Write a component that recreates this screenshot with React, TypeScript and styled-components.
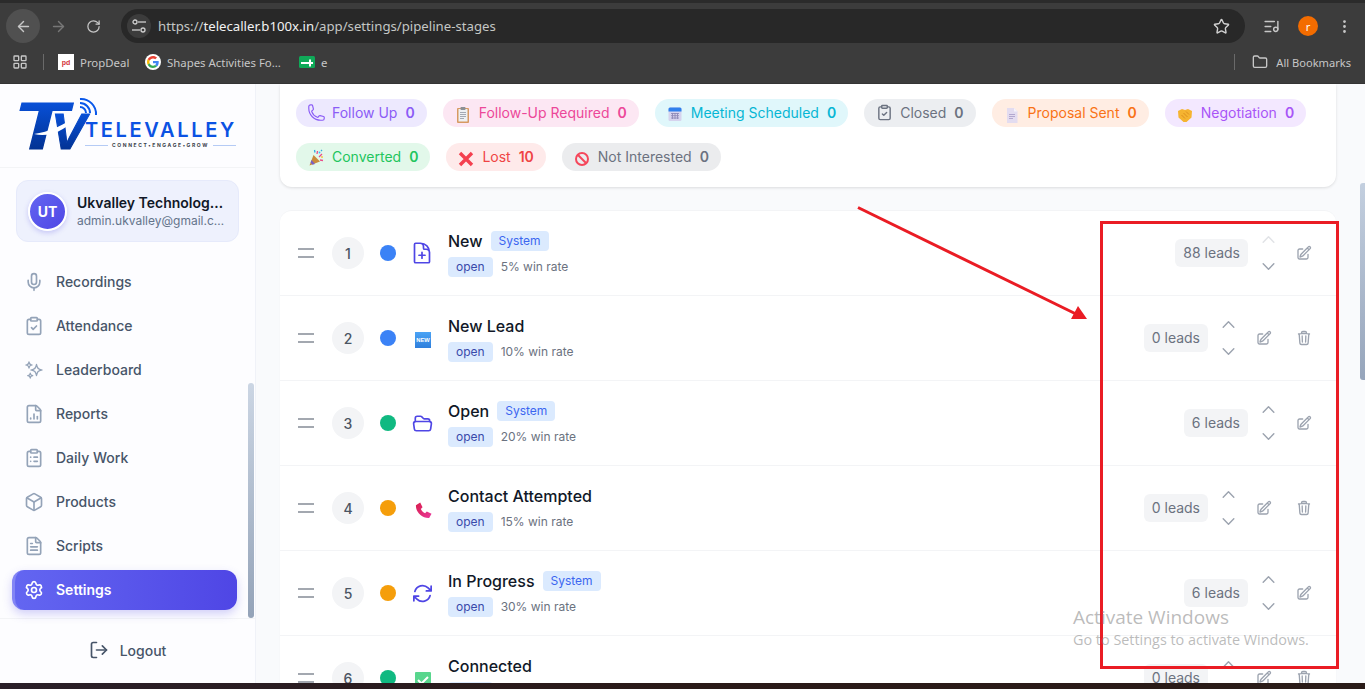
import React from "react";
import styled, { createGlobalStyle } from "styled-components";
import {
  HiOutlineSparkles,
  HiOutlinePhone,
  HiOutlineDocumentPlus,
  HiOutlineFolderOpen,
  HiOutlineArrowPath,
  HiOutlinePencilSquare,
  HiOutlineTrash,
  HiOutlineChevronUp,
  HiOutlineChevronDown,
} from "react-icons/hi2";
import {
  ArrowLeft,
  ArrowRight,
  RotateCw,
  Star,
  ListMusic,
  EllipsisVertical,
  LayoutGrid,
  Folder,
  Mic,
  ClipboardCheck,
  FileChartColumn,
  ClipboardList,
  Box,
  FileText,
  Settings,
  LogOut,
} from "lucide-react";

const Global = createGlobalStyle`
  html, body { margin: 0; padding: 0; overflow: hidden; background: #fff; }
  * { box-sizing: border-box; }
`;

const Frame = styled.div`
  position: relative;
  width: 1365px;
  height: 689px;
  overflow: hidden;
  display: flex;
  flex-direction: column;
  font-family: Inter, "Liberation Sans", sans-serif;
`;

/* ---------- browser chrome ---------- */
const Chrome = styled.header`
  flex: none;
  height: 84px;
  background: #3c3c3c;
  border-top: 3px solid #2b2b2b;
  border-bottom: 1px solid #343434;
  font-family: "Noto Sans", "Open Sans", sans-serif;
  display: flex;
  flex-direction: column;
`;
const Toolbar = styled.div`
  height: 40px;
  padding-top: 6px;
  display: flex;
  align-items: center;
  color: #c7c7c7;
`;
const NavRound = styled.div<{ $active?: boolean; $dim?: boolean }>`
  flex: none;
  width: 34px;
  height: 34px;
  margin-left: ${(p) => (p.$active ? "6px" : "1px")};
  border-radius: 50%;
  display: flex;
  align-items: center;
  justify-content: center;
  background: ${(p) => (p.$active ? "#505050" : "transparent")};
  color: ${(p) => (p.$dim ? "#777" : "#c7c7c7")};
`;
const AddressBar = styled.div`
  width: 1124px;
  height: 34px;
  margin-left: 11px;
  border-radius: 17px;
  background: #282828;
  display: flex;
  align-items: center;
  padding: 0 15px 0 6px;
`;
const TuneWrap = styled.div`
  flex: none;
  width: 24px;
  height: 24px;
  border-radius: 50%;
  background: #3c3c3c;
  display: flex;
  align-items: center;
  justify-content: center;
`;
const Url = styled.div`
  margin-left: 7px;
  flex: 1;
  font-size: 13.2px;
  color: #c4c7c5;
  white-space: nowrap;
  b { font-weight: 400; color: #f2f2f2; }
`;
const ToolRight = styled.div`
  display: flex;
  align-items: center;
  margin-left: 18px;
  gap: 18px;
  color: #c7c7c7;
`;
const Profile = styled.div`
  width: 20px;
  height: 20px;
  border-radius: 50%;
  background: #f36c00;
  color: #fff;
  font-size: 11px;
  display: flex;
  align-items: center;
  justify-content: center;
`;
const BookmarkBar = styled.div`
  height: 40px;
  padding: 0 0 2px 12px;
  display: flex;
  align-items: center;
  color: #c7c7c7;
  font-size: 11.4px;
`;
const BarDivider = styled.span`
  width: 1px;
  height: 16px;
  background: #6a6a6a;
  margin: 0 14px 0 15px;
`;
const EndDivider = styled(BarDivider)`
  margin: 0 9px 0 0;
`;
const Bookmark = styled.div<{ $w: number }>`
  width: ${(p) => p.$w}px;
  display: flex;
  align-items: center;
  gap: 6px;
  white-space: nowrap;
`;
const PdIcon = styled.span`
  width: 16px;
  height: 16px;
  background: #fff;
  color: #d3333a;
  font-size: 7px;
  font-weight: 700;
  display: flex;
  align-items: center;
  justify-content: center;
  font-family: "Liberation Sans", sans-serif;
`;
const BookmarkEnd = styled.div`
  margin-left: auto;
  display: flex;
  align-items: center;
  padding-right: 14px;
  gap: 8px;
  font-size: 11.1px;
`;

/* ---------- app layout ---------- */
const Body = styled.div`
  flex: 1;
  min-height: 0;
  display: flex;
  overflow: hidden;
`;
const Taskbar = styled.div`
  flex: none;
  height: 6px;
  background: linear-gradient(90deg, #2a1f28, #2a1a18 50%, #2a1c18);
`;
const Sidebar = styled.aside`
  position: relative;
  flex: none;
  width: 256px;
  background: #fdfdff;
  border-right: 1px solid #f0f2f8;
  display: flex;
  flex-direction: column;
`;
const LogoArea = styled.div`
  flex: none;
  height: 84px;
  padding: 14px 0 0 20px;
  display: flex;
  align-items: flex-start;
  border-bottom: 1px solid #f3f4f6;
`;
const LogoWords = styled.div`
  margin-left: -13px;
  margin-top: 22px;
  width: 151px;
  display: flex;
  flex-direction: column;
`;
const LogoName = styled.div`
  font-size: 20px;
  line-height: 20px;
  font-weight: 600;
  letter-spacing: 2.65px;
  color: #0b52e3;
  white-space: nowrap;
`;
const LogoTag = styled.div`
  margin-top: 2px;
  display: flex;
  align-items: center;
  gap: 4px;
  font-size: 5px;
  line-height: 6px;
  font-weight: 700;
  letter-spacing: 1.6px;
  color: #3a3f4a;
  white-space: nowrap;
  &::before, &::after {
    content: "";
    flex: 1;
    height: 1px;
    background: #b5cbf5;
  }
`;
const UserCard = styled.div`
  flex: none;
  margin: 12px 16px 0;
  height: 62px;
  border-radius: 12px;
  background: #eef1fd;
  border: 1px solid #e6eafb;
  display: flex;
  align-items: center;
  padding-left: 11px;
  gap: 10px;
`;
const Avatar = styled.div`
  flex: none;
  width: 39px;
  height: 39px;
  border-radius: 50%;
  border: 2px solid #fff;
  background: linear-gradient(135deg, #6366f1, #4f46e5);
  box-shadow: 0 2px 5px rgba(79, 70, 229, 0.25);
  color: #fff;
  font-size: 14px;
  font-weight: 700;
  display: flex;
  align-items: center;
  justify-content: center;
`;
const UserText = styled.div`
  width: 148px;
  min-width: 0;
`;
const UserName = styled.div`
  font-size: 14px;
  line-height: 20px;
  font-weight: 600;
  color: #111827;
  white-space: nowrap;
  overflow: hidden;
  text-overflow: ellipsis;
`;
const UserMail = styled.div`
  font-size: 12px;
  line-height: 16px;
  color: #64748b;
  white-space: nowrap;
  overflow: hidden;
  text-overflow: ellipsis;
`;
const Nav = styled.nav`
  flex: 1;
  padding: 20px 18px 8px 12px;
  display: flex;
  flex-direction: column;
  gap: 4px;
  border-bottom: 1px solid #f3f4f6;
`;
const NavItem = styled.div<{ $active?: boolean }>`
  flex: none;
  height: 40px;
  width: 225px;
  padding-left: ${(p) => (p.$active ? "9px" : "12px")};
  padding-bottom: 1px;
  gap: 12px;
  display: flex;
  align-items: center;
  border-radius: 12px;
  font-size: 14px;
  font-weight: ${(p) => (p.$active ? 600 : 500)};
  color: ${(p) => (p.$active ? "#fff" : "#475569")};
  background: ${(p) => (p.$active ? "linear-gradient(90deg, #6366f1, #4f46e5)" : "transparent")};
  box-shadow: ${(p) => (p.$active ? "0 4px 10px rgba(79, 70, 229, 0.25)" : "none")};
  border-left: ${(p) => (p.$active ? "3px solid #8385f5" : "none")};
  svg { flex: none; color: ${(p) => (p.$active ? "#fff" : "#94a3b8")}; }
`;
const Flipped = styled(HiOutlineSparkles)`
  transform: scaleX(-1);
`;
const SideScroll = styled.div`
  position: absolute;
  right: 1px;
  top: 299px;
  width: 6px;
  height: 235px;
  border-radius: 3px;
  background: linear-gradient(180deg, #ccd6e4, #94a3b8);
`;
const Logout = styled.div`
  flex: none;
  height: 65px;
  display: flex;
  align-items: center;
  justify-content: center;
  gap: 11px;
  padding-bottom: 3px;
  font-size: 14px;
  font-weight: 500;
  color: #475569;
`;

/* ---------- main ---------- */
const Main = styled.main`
  position: relative;
  flex: 1;
  min-width: 0;
  background: #f9fafc;
  padding: 0 29px 0 24px;
  display: flex;
  flex-direction: column;
  gap: 23px;
  overflow: hidden;
`;
const PageScroll = styled.div`
  position: absolute;
  right: 0;
  top: 99px;
  width: 5px;
  height: 197px;
  border-radius: 3px 0 0 3px;
  background: linear-gradient(180deg, #c3cfdf, #96a5bb);
`;
const ChipCard = styled.section`
  flex: none;
  background: #fff;
  border-radius: 0 0 12px 12px;
  box-shadow: 0 1px 3px rgba(0, 0, 0, 0.12);
  padding: 15px 16px 16px;
  display: flex;
  flex-wrap: wrap;
  gap: 16px;
`;
const Chip = styled.div<{ $bg: string; $fg: string }>`
  height: 28px;
  border-radius: 14px;
  padding: 0 12px 1px;
  background: ${(p) => p.$bg};
  color: ${(p) => p.$fg};
  display: flex;
  align-items: center;
  font-size: 14px;
  white-space: nowrap;
`;
const ChipIcon = styled.span`
  flex: none;
  width: 16px;
  height: 20px;
  display: flex;
  align-items: center;
  justify-content: center;
  svg { flex: none; }
`;
const ChipLabel = styled.span`
  margin-left: 8px;
`;
const ChipCount = styled.span`
  margin-left: 8px;
  font-weight: 600;
`;
const StageList = styled.section`
  flex: none;
  background: #fff;
  border-top: 1px solid #f3f4f6;
  border-radius: 12px 12px 0 0;
  box-shadow: 0 1px 2px rgba(0, 0, 0, 0.03);
`;
const Row = styled.div`
  height: 85px;
  padding: 0 16px;
  display: flex;
  align-items: center;
  gap: 16px;
  border-bottom: 1px solid #f3f4f6;
`;
const Grip = styled.svg`
  flex: none;
`;
const Num = styled.div`
  flex: none;
  width: 32px;
  height: 32px;
  border-radius: 50%;
  background: #f3f4f6;
  color: #4b5563;
  font-size: 14px;
  font-weight: 500;
  display: flex;
  align-items: center;
  justify-content: center;
`;
const Dot = styled.span<{ $c: string }>`
  flex: none;
  width: 16px;
  height: 16px;
  border-radius: 50%;
  background: ${(p) => p.$c};
`;
const StageIcon = styled.div<{ $emoji?: boolean }>`
  flex: none;
  width: 20px;
  height: 20px;
  color: #4f46e5;
  display: flex;
  align-items: center;
  justify-content: center;
  ${(p) => p.$emoji && "transform: translate(1px, 2px);"}
  svg { flex: none; }
`;
const StageInfo = styled.div`
  display: flex;
  flex-direction: column;
  gap: 4px;
`;
const NameLine = styled.div`
  height: 24px;
  display: flex;
  align-items: center;
  gap: 8px;
`;
const StageName = styled.span`
  font-size: 16px;
  font-weight: 500;
  color: #111827;
`;
const SystemTag = styled.span`
  height: 20px;
  padding: 0 8px 1px;
  border-radius: 4px;
  background: #dbeafe;
  color: #3b66f0;
  font-size: 12px;
  display: flex;
  align-items: center;
`;
const SubLine = styled.div`
  height: 20px;
  padding-bottom: 1px;
  display: flex;
  align-items: center;
  gap: 8px;
  font-size: 12px;
  color: #6b7280;
`;
const OpenTag = styled.span`
  height: 20px;
  padding: 0 8px;
  border-radius: 4px;
  background: #dbeafe;
  color: #3949ab;
  display: flex;
  align-items: center;
`;
const RowRight = styled.div`
  margin-left: auto;
  display: flex;
  align-items: center;
  gap: 8px;
`;
const Leads = styled.div`
  height: 28px;
  padding: 0 8px 1px;
  border-radius: 6px;
  background: #f3f4f6;
  color: #6b7280;
  font-size: 14px;
  display: flex;
  align-items: center;
`;
const Arrows = styled.div`
  width: 24px;
  height: 44px;
  display: flex;
  flex-direction: column;
  align-items: center;
  justify-content: space-between;
  color: #9ca3af;
`;
const Arrow = styled.span<{ $off?: boolean }>`
  display: flex;
  opacity: ${(p) => (p.$off ? 0.3 : 1)};
`;
const Action = styled.div`
  width: 32px;
  height: 32px;
  display: flex;
  align-items: center;
  justify-content: center;
  color: #9ca3af;
`;

/* ---------- annotations over the shot ---------- */
const RedBox = styled.div`
  position: absolute;
  left: 1100px;
  top: 221px;
  width: 239px;
  height: 448px;
  border: 3px solid #ea1c24;
  pointer-events: none;
`;
const RedArrow = styled.svg`
  position: absolute;
  left: 850px;
  top: 200px;
`;
const Watermark = styled.div`
  position: absolute;
  left: 1073px;
  top: 604px;
  font-family: "Open Sans", "Noto Sans", sans-serif;
  color: rgba(120, 120, 120, 0.5);
  white-space: nowrap;
`;
const WatermarkTitle = styled.div`
  font-size: 19px;
  line-height: 26px;
`;
const WatermarkSub = styled.div`
  font-size: 14.4px;
  line-height: 20px;
`;

/* ---------- drawn icons ---------- */
const Tune = () => (
  <svg width="16" height="16" viewBox="0 0 16 16" fill="none" stroke="#d0d0d0" strokeWidth="1.3">
    <circle cx="4" cy="4" r="2" />
    <path d="M7 4h8" />
    <circle cx="12" cy="12" r="2" />
    <path d="M1 12h8" />
  </svg>
);
const GoogleG = () => (
  <svg width="16" height="16" viewBox="0 0 48 48">
    <circle cx="24" cy="24" r="24" fill="#fff" />
    <g transform="translate(6 6) scale(.75)">
      <path fill="#EA4335" d="M24 9.5c3.5 0 6.700 1.200 9.200 3.600l6.900-6.900C35.900 2.400 30.500 0 24 0 14.600 0 6.500 5.400 2.600 13.200l8 6.200C12.400 13.700 17.700 9.500 24 9.500z" />
      <path fill="#4285F4" d="M46.900 24.500c0-1.600-.1-3.100-.4-4.500H24v9h12.900c-.6 3-2.200 5.500-4.700 7.200l7.700 6c4.500-4.200 7-10.300 7-17.700z" />
      <path fill="#FBBC05" d="M10.500 28.600c-.5-1.400-.8-3-.8-4.600s.3-3.200.8-4.600l-8-6.200C.9 16.500 0 20.100 0 24s.9 7.500 2.600 10.800l7.900-6.200z" />
      <path fill="#34A853" d="M24 48c6.500 0 11.900-2.100 15.900-5.800l-7.700-6c-2.200 1.400-4.900 2.300-8.200 2.300-6.300 0-11.600-4.200-13.500-9.900l-8 6.200C6.500 42.600 14.600 48 24 48z" />
    </g>
  </svg>
);
const GreenFav = () => (
  <svg width="16" height="12" viewBox="0 0 16 12">
    <rect width="16" height="12" rx="1.500" fill="#0fa958" />
    <path d="M2 7h12M11 3.500v7" stroke="#fff" strokeWidth="2" />
  </svg>
);
const ClipboardEmoji = () => (
  <svg width="16" height="18" viewBox="0 0 16 18" style={{ marginTop: 4 }}>
    <rect x="2" y="2" width="12" height="15" rx="1" fill="#d79a62" />
    <rect x="3.500" y="3" width="9" height="12.500" fill="#eef0f2" />
    <path d="M5 6.500h6M5 8.500h6M5 10.500h6M5 12.500h4" stroke="#a4a9b2" strokeWidth="1" />
    <rect x="5.500" y="1" width="5" height="3" rx=".7" fill="#8d9096" />
  </svg>
);
const CalendarEmoji = () => (
  <svg width="16" height="16" viewBox="0 0 16 16" style={{ marginTop: 3 }}>
    <rect x="1.500" y="1.500" width="13" height="13.500" rx="1.500" fill="#d6d3ee" />
    <path d="M1.500 5.500V3a1.500 1.500 0 0 1 1.500-1.500h10A1.500 1.500 0 0 1 14.500 3v2.500z" fill="#2f80ed" />
    <path d="M4 7.500h8M4 9.700h8M4 12h8M5.500 7v6M8 7v6M10.500 7v6" stroke="#8f8ab8" strokeWidth=".9" />
  </svg>
);
const PopperEmoji = () => (
  <svg width="16" height="18" viewBox="0 0 16 18" style={{ marginTop: 3 }}>
    <path d="M5.500 6 1.500 16.500 12 12.500z" fill="#c98a3c" />
    <path d="M3.500 11 7 15 4.500 15.700 2.600 13.400z" fill="#7a5fc4" />
    <path d="M9 5 9.500 2M11 8l3-3M12 11l3 .5" stroke="#e94d8a" strokeWidth="1.300" />
    <path d="M7 3.500 6.500 1M13 2l1-1" stroke="#2fa8e0" strokeWidth="1.300" />
    <circle cx="11.500" cy="3.500" r=".9" fill="#38bdf8" />
    <circle cx="14" cy="8" r=".9" fill="#f4c430" />
  </svg>
);
const CrossEmoji = () => (
  <svg width="16" height="16" viewBox="0 0 16 16" style={{ marginTop: 4 }}>
    <path d="M2 2l12 12M14 2 2 14" stroke="#f4404f" strokeWidth="3.400" />
  </svg>
);
const NoEntryEmoji = () => (
  <svg width="16" height="16" viewBox="0 0 16 16" style={{ marginTop: 4 }}>
    <circle cx="8" cy="8" r="6" fill="none" stroke="#f5475b" strokeWidth="2" />
    <path d="M3.800 3.800l8.400 8.400" stroke="#f5475b" strokeWidth="2" />
  </svg>
);
const DocEmoji = () => (
  <svg width="16" height="16" viewBox="0 0 16 16" style={{ marginTop: 4 }}>
    <path d="M3 1h7l3.500 3.500V16H3z" fill="#e3dcf0" />
    <path d="M10 1v3.500h3.500z" fill="#f6f3fb" />
    <path d="M5 7.500h6M5 9.500h6M5 11.500h4" stroke="#b3a7cf" strokeWidth="1" />
  </svg>
);
const HandshakeEmoji = () => (
  <svg width="16" height="16" viewBox="0 0 16 16" style={{ marginTop: 4 }}>
    <path d="M1 4 5 2l3 1 3-1 4 2-.5 6.500L9.500 15h-3L1.500 10.500z" fill="#f5b431" />
    <path d="M4.500 8l3.500 3.500M6.500 6l4 4M9 4.500l3 3" stroke="#d98a1c" strokeWidth=".9" fill="none" />
  </svg>
);
const NewEmoji = () => (
  <svg width="16" height="16" viewBox="0 0 16 16">
    <defs>
      <linearGradient id="newBg" x1="0" y1="0" x2="0" y2="1">
        <stop offset="0" stopColor="#4aa3f5" />
        <stop offset="1" stopColor="#2f7fdc" />
      </linearGradient>
    </defs>
    <rect width="16" height="16" fill="url(#newBg)" />
    <text x="8" y="10.300" textAnchor="middle" fontSize="5.800" fontWeight="700" fill="#fff" fontFamily="'Liberation Sans', sans-serif">
      NEW
    </text>
  </svg>
);
const PinkPhone = () => (
  <svg width="17" height="17" viewBox="0 0 18 18">
    <defs>
      <linearGradient id="pinkPh" x1="0" y1="0" x2="1" y2="1">
        <stop offset="0" stopColor="#d81e4d" />
        <stop offset="1" stopColor="#ea3a9c" />
      </linearGradient>
    </defs>
    <path d="M1 3.500 5.500 .5 8 5.500 6.200 7.300c.7 1.900 2.400 3.600 4.500 4.500L12.500 10 17.500 12.500 15 17C7.500 17.500 .5 10.500 1 3.500z" fill="url(#pinkPh)" />
  </svg>
);
const CheckEmoji = () => (
  <svg width="16" height="16" viewBox="0 0 16 16">
    <rect width="16" height="16" rx="1" fill="#58d68d" />
    <path d="M3 8l3.500 3.500L13 5" stroke="#fff" strokeWidth="2" fill="none" />
  </svg>
);
const GripIcon = () => (
  <Grip width="20" height="20" viewBox="0 0 20 20">
    <path d="M2 6h16M2 14h16" stroke="#a3a8b0" strokeWidth="2" />
  </Grip>
);
const LogoMark = () => (
  <svg width="78" height="54" viewBox="0 0 78 54" style={{ flex: "none", overflow: "visible" }}>
    <defs>
      <linearGradient id="tvFill" x1="0" y1="0" x2="0" y2="1">
        <stop offset="0" stopColor="#0a58ea" />
        <stop offset="1" stopColor="#002a80" />
      </linearGradient>
    </defs>
    <g fontFamily="'Liberation Sans', sans-serif" fontWeight="700" fontStyle="italic" fill="url(#tvFill)">
      <text transform="translate(-6 51) scale(1.32 1)" fontSize="66" stroke="url(#tvFill)" strokeWidth="1">T</text>
      <text transform="translate(31 51) scale(1.05 1)" fontSize="50" stroke="url(#tvFill)" strokeWidth="1">V</text>
    </g>
    <path d="M14 36 C28 34 44 28 62 14 C48 32 30 40 14 36z" fill="#fff" />
    <g fill="none" stroke="#0a58ea" strokeWidth="2" transform="translate(0 1)">
      <path d="M60 8a6 6 0 0 1 6 6" />
      <path d="M60 4a10 10 0 0 1 10 10" />
      <path d="M60 0a15 15 0 0 1 16 16" />
    </g>
  </svg>
);

type Stage = {
  n: number;
  name: string;
  dot: string;
  icon: React.ReactNode;
  emoji?: boolean;
  system?: boolean;
  rate: string;
  leads: number;
  firstRow?: boolean;
};

const BLUE = "#3b82f6";
const GREEN = "#10b981";
const AMBER = "#f59e0b";

const stages: Stage[] = [
  { n: 1, name: "New", dot: BLUE, icon: <HiOutlineDocumentPlus size={24} strokeWidth={1.7} />, system: true, rate: "5%", leads: 88, firstRow: true },
  { n: 2, name: "New Lead", dot: BLUE, icon: <NewEmoji />, emoji: true, rate: "10%", leads: 0 },
  { n: 3, name: "Open", dot: GREEN, icon: <HiOutlineFolderOpen size={21} strokeWidth={1.9} />, system: true, rate: "20%", leads: 6 },
  { n: 4, name: "Contact Attempted", dot: AMBER, icon: <PinkPhone />, emoji: true, rate: "15%", leads: 0 },
  { n: 5, name: "In Progress", dot: AMBER, icon: <HiOutlineArrowPath size={23} strokeWidth={1.8} />, system: true, rate: "30%", leads: 6 },
  { n: 6, name: "Connected", dot: GREEN, icon: <CheckEmoji />, emoji: true, rate: "40%", leads: 0 },
];

const chips = [
  { label: "Follow Up", count: 0, bg: "#ede9fe", fg: "#8b5cf6", icon: <HiOutlinePhone size={19} /> },
  { label: "Follow-Up Required", count: 0, bg: "#fce7f3", fg: "#ec4899", icon: <ClipboardEmoji /> },
  { label: "Meeting Scheduled", count: 0, bg: "#e0f7fb", fg: "#06b6d4", icon: <CalendarEmoji /> },
  { label: "Closed", count: 0, bg: "#eceef1", fg: "#6b7280", icon: <ClipboardCheck size={17} /> },
  { label: "Proposal Sent", count: 0, bg: "#ffede3", fg: "#f97316", icon: <DocEmoji /> },
  { label: "Negotiation", count: 0, bg: "#f3e8ff", fg: "#a855f7", icon: <HandshakeEmoji /> },
  { label: "Converted", count: 0, bg: "#e2f8ea", fg: "#22c55e", icon: <PopperEmoji /> },
  { label: "Lost", count: 10, bg: "#feeaea", fg: "#ef4444", icon: <CrossEmoji /> },
  { label: "Not Interested", count: 0, bg: "#ebecee", fg: "#6b7280", icon: <NoEntryEmoji /> },
];

const navItems = [
  { label: "Recordings", icon: <Mic size={20} /> },
  { label: "Attendance", icon: <ClipboardCheck size={20} /> },
  { label: "Leaderboard", icon: <Flipped size={20} /> },
  { label: "Reports", icon: <FileChartColumn size={20} /> },
  { label: "Daily Work", icon: <ClipboardList size={20} /> },
  { label: "Products", icon: <Box size={20} /> },
  { label: "Scripts", icon: <FileText size={20} /> },
  { label: "Settings", icon: <Settings size={20} />, active: true },
];

export default function App() {
  return (
    <Frame>
      <Global />
      <Chrome>
        <Toolbar>
          <NavRound $active>
            <ArrowLeft size={17} />
          </NavRound>
          <NavRound $dim>
            <ArrowRight size={17} />
          </NavRound>
          <NavRound>
            <RotateCw size={15} />
          </NavRound>
          <AddressBar>
            <TuneWrap>
              <Tune />
            </TuneWrap>
            <Url>
              https://<b>telecaller.b100x.in</b>/app/settings/pipeline-stages
            </Url>
            <Star size={17} color="#d0d0d0" />
          </AddressBar>
          <ToolRight>
            <ListMusic size={17} />
            <Profile>r</Profile>
            <EllipsisVertical size={17} />
          </ToolRight>
        </Toolbar>
        <BookmarkBar>
          <LayoutGrid size={16} />
          <BarDivider />
          <Bookmark $w={87}>
            <PdIcon>pd</PdIcon>
            PropDeal
          </Bookmark>
          <Bookmark $w={154}>
            <GoogleG />
            Shapes Activities Fo...
          </Bookmark>
          <Bookmark $w={40}>
            <GreenFav />
            e
          </Bookmark>
          <BookmarkEnd>
            <EndDivider />
            <Folder size={16} />
            All Bookmarks
          </BookmarkEnd>
        </BookmarkBar>
      </Chrome>
      <Body>
        <Sidebar>
          <LogoArea>
            <LogoMark />
            <LogoWords>
              <LogoName>TELEVALLEY</LogoName>
              <LogoTag>CONNECT•ENGAGE•GROW</LogoTag>
            </LogoWords>
          </LogoArea>
          <UserCard>
            <Avatar>UT</Avatar>
            <UserText>
              <UserName>Ukvalley Technologies</UserName>
              <UserMail>admin.ukvalley@gmail.com</UserMail>
            </UserText>
          </UserCard>
          <Nav>
            {navItems.map((item) => (
              <NavItem key={item.label} $active={item.active}>
                {item.icon}
                {item.label}
              </NavItem>
            ))}
          </Nav>
          <SideScroll />
          <Logout>
            <LogOut size={20} />
            Logout
          </Logout>
        </Sidebar>
        <Main>
          <ChipCard>
            {chips.map((c) => (
              <Chip key={c.label} $bg={c.bg} $fg={c.fg}>
                <ChipIcon>{c.icon}</ChipIcon>
                <ChipLabel>{c.label}</ChipLabel>
                <ChipCount>{c.count}</ChipCount>
              </Chip>
            ))}
          </ChipCard>
          <StageList>
            {stages.map((s) => (
              <Row key={s.n}>
                <GripIcon />
                <Num>{s.n}</Num>
                <Dot $c={s.dot} />
                <StageIcon $emoji={s.emoji}>{s.icon}</StageIcon>
                <StageInfo>
                  <NameLine>
                    <StageName>{s.name}</StageName>
                    {s.system && <SystemTag>System</SystemTag>}
                  </NameLine>
                  <SubLine>
                    <OpenTag>open</OpenTag>
                    {s.rate} win rate
                  </SubLine>
                </StageInfo>
                <RowRight>
                  <Leads>{s.leads} leads</Leads>
                  <Arrows>
                    <Arrow $off={s.firstRow}>
                      <HiOutlineChevronUp size={17} strokeWidth={2} />
                    </Arrow>
                    <Arrow>
                      <HiOutlineChevronDown size={17} strokeWidth={2} />
                    </Arrow>
                  </Arrows>
                  <Action>
                    <HiOutlinePencilSquare size={16} strokeWidth={2} />
                  </Action>
                  {!s.system && (
                    <Action>
                      <HiOutlineTrash size={16} strokeWidth={2} />
                    </Action>
                  )}
                </RowRight>
              </Row>
            ))}
          </StageList>
          <PageScroll />
        </Main>
      </Body>
      <Taskbar />
      <RedBox />
      <RedArrow width="245" height="125" viewBox="0 0 245 125">
        <path d="M8 7.500 226 114" stroke="#ea1c24" strokeWidth="3" fill="none" />
        <path d="M237 119 221 119 228 106z" fill="#ea1c24" />
      </RedArrow>
      <Watermark>
        <WatermarkTitle>Activate Windows</WatermarkTitle>
        <WatermarkSub>Go to Settings to activate Windows.</WatermarkSub>
      </Watermark>
    </Frame>
  );
}
